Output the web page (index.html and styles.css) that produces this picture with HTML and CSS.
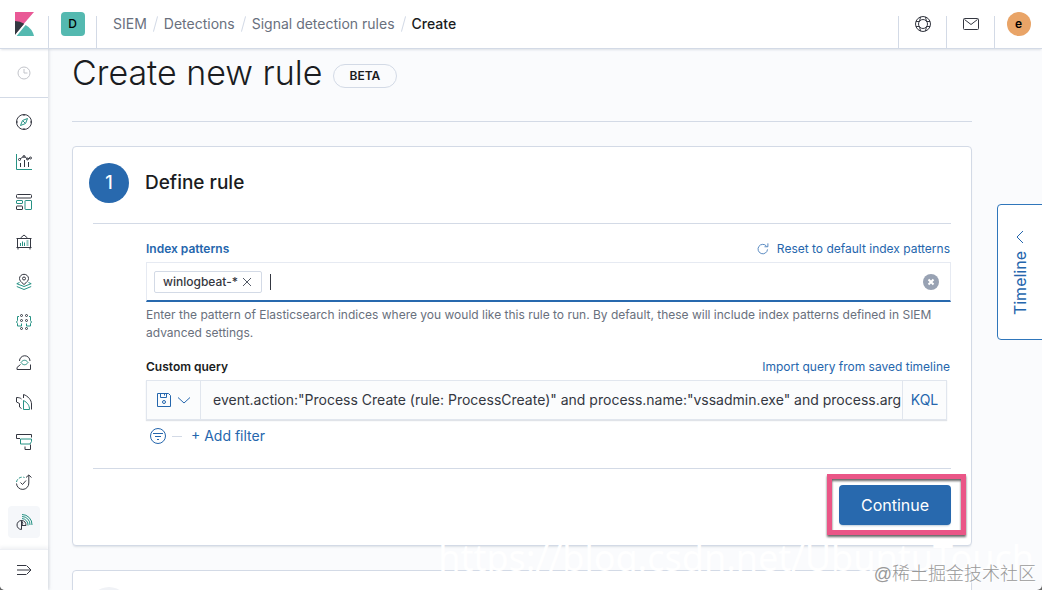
FILE: index.html
```html
<!DOCTYPE html>
<html lang="en">

<head>
    <meta charset="UTF-8">
    <title>Create - Signal detection rules - Kibana</title>
    <link rel="stylesheet" href="styles.css">
</head>

<body>
    <div class="app">
        <header class="header">
            <a class="header-cell logo" href="#" aria-label="Home">
                <svg width="24" height="24" viewBox="0 0 24 24">
                    <path fill="#e7478b" fill-opacity=".9" d="M3 0h19L3 22z"/>
                    <path fill="#343741" d="M3 9v14L12.200 11.700A18 18 0 0 0 3 9z"/>
                    <path fill="#54b9b0" d="M13.600 13 4.600 24H22a17 17 0 0 0-8.400-11z"/>
                    <path stroke="#fff" d="M3.500 23.500 23 0"/>
                </svg>
            </a>
            <button class="header-cell sep" aria-label="Default space"><span class="space">D</span></button>
            <nav class="crumbs sep">
                <a href="#">SIEM</a>
                <i></i>
                <a href="#">Detections</a>
                <i></i>
                <a href="#">Signal detection rules</a>
                <i></i>
                <span class="current">Create</span>
            </nav>
            <button class="header-cell sep" aria-label="Help">
                <svg class="icon" viewBox="0 0 16 16"><circle cx="8" cy="8" r="7.500"/><circle cx="8" cy="8" r="4.500"/><path d="m5.500 1-1 4.500L1 5.500M10.500 1l1 4.500 3.500 0M5.500 15l-1-4.500L1 10.500M10.500 15l1-4.500 3.500 0"/></svg>
            </button>
            <button class="header-cell sep" aria-label="Newsfeed">
                <svg class="icon" viewBox="0 0 16 16"><rect x=".5" y="2.500" width="15" height="11" rx="1"/><path d="m1.500 3.500 6.500 5 6.500-5"/></svg>
            </button>
            <button class="header-cell sep" aria-label="Account"><span class="avatar">e</span></button>
        </header>

        <div class="body">
            <nav class="sidebar">
                <a class="recent" href="#" aria-label="Recently viewed">
                    <svg class="icon muted" viewBox="0 0 16 16"><circle cx="8" cy="8" r="6"/><path d="M8 4v4h3.500"/></svg>
                </a>
                <div class="nav-list">
                    <a href="#" aria-label="Discover">
                        <svg class="icon" viewBox="0 0 16 16"><circle cx="8" cy="8" r="7.500"/><path d="M8 .5V2m0 12v1.500M.5 8H2m12 0h1.500"/><path class="teal" d="M11.500 4.500 9.500 9.500l-5 2 2-5z"/><path class="teal" d="m7 7 2 2"/></svg>
                    </a>
                    <a href="#" aria-label="Visualize">
                        <svg class="icon" viewBox="0 0 16 16"><path class="teal" d="M.5 0v15.500H16"/><path d="M4.500 9v4M8.500 6v7M12.500 8v5"/><path d="m4 5 3.500-2.500M8.500 2.500l3 2.500 2.500-1"/><circle cx="3.500" cy="5.500" r="1"/><circle cx="8" cy="2.500" r="1"/><circle cx="11.500" cy="5" r="1"/><circle cx="14.500" cy="4" r="1"/></svg>
                    </a>
                    <a href="#" aria-label="Dashboard">
                        <svg class="icon" viewBox="0 0 16 16"><rect x=".5" y=".5" width="15" height="3.500" rx="1"/><rect class="teal" x=".5" y="6.500" width="6" height="3" rx=".5"/><rect class="teal" x="9" y="6.500" width="6.500" height="9" rx=".5"/><rect x=".5" y="12" width="6" height="3.500" rx=".5"/></svg>
                    </a>
                    <a href="#" aria-label="Canvas">
                        <svg class="icon" viewBox="0 0 16 16"><path d="M.5 4.500h15M1.500 4.500v9M14.500 4.500v9M.5 13.500h15M4.500 4 8 1l3.500 3M2 15.500v-2m12 2v-2"/><path class="teal" d="M4.500 9v3M6.500 7.500V12M8.500 8.500V12M10.500 7h2m-2 2h2m-2 2h2"/></svg>
                    </a>
                    <a href="#" aria-label="Maps">
                        <svg class="icon" viewBox="0 0 16 16"><path d="M8 10.500C5 8 3.500 6.500 3.500 4.500a4.500 4.200 0 0 1 9 0c0 2-1.500 3.500-4.500 6z"/><circle cx="8" cy="4.500" r="1.500"/><path class="teal" d="M3.500 8.500.8 9.700 8 12.500l7.200-2.800-2.700-1.200M.8 12.500 8 15.500l7.200-3"/></svg>
                    </a>
                    <a href="#" aria-label="Machine learning">
                        <svg class="icon" viewBox="0 0 16 16"><circle cx="5.500" cy="1.500" r="1"/><circle cx="10.500" cy="1.500" r="1"/><circle cx="5.500" cy="6.500" r="1"/><circle cx="10.500" cy="6.500" r="1"/><circle cx="5.500" cy="14.500" r="1"/><circle cx="10.500" cy="14.500" r="1"/><path class="teal" d="M3 2.500H1.500v4L.5 8l1 1.500v2.500H5.500V9.500M13 2.500h1.500v4l1 1.500-1 1.500v2.500H10.500V9.500"/></svg>
                    </a>
                    <a href="#" aria-label="Metrics">
                        <svg class="icon" viewBox="0 0 16 16"><path d="M3.500 7A5 5 0 1 1 14 7M4.500 10.500l-3.500 3v2h13.500v-5"/><path class="teal" d="M5 8.500c2-3 5-3 7 0-2 3-5 3-7 0z"/></svg>
                    </a>
                    <a href="#" aria-label="Logs">
                        <svg class="icon" viewBox="0 0 16 16"><path d="M5.500 14.500 3.500 13V9.500L.5 8V3.500C3 3.500 4.500 4 5.500 5M7.500 4V.5C12 2 15.500 6 15.500 10v5.500"/><path class="teal" d="M7.500 6.500v9h6c0-4-2-7-6-9z"/></svg>
                    </a>
                    <a href="#" aria-label="APM">
                        <svg class="icon" viewBox="0 0 16 16"><path d="M4 4.500H.5v-4h15v3M9 12.500v3h5.500v-5"/><path class="teal" d="M4.500 5h11v2.500l-1.500 2.500h-9.500z"/></svg>
                    </a>
                    <a href="#" aria-label="Uptime">
                        <svg class="icon" viewBox="0 0 16 16"><path d="M.5 9.500A6 6 0 0 0 12.800 9V1M10 3.500 12.800 1l2.700 2.500M4.500 8.500l2 2 3.500-4"/><path class="teal" stroke-dasharray="3 1.500" d="M.5 8a6 6 0 0 1 8-4.500"/></svg>
                    </a>
                    <a class="active" href="#" aria-label="SIEM">
                        <svg class="icon" viewBox="0 0 16 16"><path d="M5.500 6.500a4.500 4.500 0 0 0 0 9zM5.500 6.500a4 4 0 0 1 0 5.500"/><path d="M5.500 6.500c3 0 4.500 2 4.500 5H5.500"/><path class="teal" d="M6 4.500a6.500 6.500 0 0 1 6 7M6 2.500a8 8 0 0 1 8 8.500M6 .5a10 10 0 0 1 10 10.500"/></svg>
                    </a>
                </div>
                <button class="expand" aria-label="Expand navigation">
                    <svg class="icon" viewBox="0 0 16 16"><path d="M1 3.500h9.500M1 8h14M1 12.500h9.500M11 4l4 4-4 4"/></svg>
                </button>
            </nav>

            <main class="main">
                <div class="page-title">
                    <h1>Create new rule</h1>
                    <span class="beta">BETA</span>
                </div>

                <section class="panel">
                    <div class="step-head">
                        <span class="step-num">1</span>
                        <h2>Define rule</h2>
                    </div>
                    <form class="step-form">
                        <div class="fields">
                            <div class="label-row">
                                <label class="focused" for="index">Index patterns</label>
                                <a href="#"><svg class="icon small" viewBox="0 0 16 16"><path d="M14 8.500A6.300 6.300 0 1 1 12.500 4M14.500 .5v4.500H10"/></svg>Reset to default index patterns</a>
                            </div>
                            <div class="combo">
                                <span class="pill">winlogbeat-*<button type="button" aria-label="Remove winlogbeat-*"><svg class="icon" viewBox="0 0 16 16"><path d="m4 4 8 8m0-8-8 8"/></svg></button></span>
                                <span class="caret"></span>
                                <input id="index" type="text">
                                <button class="clear" type="button" aria-label="Clear input"><svg width="16" height="16" viewBox="0 0 16 16"><circle cx="8" cy="8" r="8" fill="#98a2b3"/><path d="m5.500 5.500 5 5m0-5-5 5" stroke="#fff" stroke-width="2"/></svg></button>
                            </div>
                            <p class="help">Enter the pattern of Elasticsearch indices where you would like this rule to run. By default, these will include index patterns defined in SIEM advanced settings.</p>

                            <div class="label-row">
                                <label for="query">Custom query</label>
                                <a href="#">Import query from saved timeline</a>
                            </div>
                            <div class="query-bar">
                                <button class="saved" type="button" aria-label="Saved queries">
                                    <svg class="icon" viewBox="0 0 16 16"><path d="M1.500 1.500h11l2 2v11h-13zM4.500 1.500v4h6v-4M8.500 2v1.500"/><circle cx="8" cy="10" r="1.500"/></svg>
                                    <svg class="icon" viewBox="0 0 16 16"><path d="m2 5.500 6 5.500 6-5.500"/></svg>
                                </button>
                                <input id="query" type="text" value='event.action:"Process Create (rule: ProcessCreate)" and process.name:"vssadmin.exe" and process.arg'>
                                <button class="kql" type="button">KQL</button>
                            </div>
                            <div class="filters">
                                <button type="button" aria-label="Filter options"><svg class="icon" viewBox="0 0 16 16"><circle cx="8" cy="8" r="7.500"/><path d="M3 5.500h10M5 8.500h6M7 11.500h2"/></svg></button>
                                <span class="dash"></span>
                                <button type="button">+ Add filter</button>
                            </div>
                        </div>
                        <div class="actions">
                            <button class="continue" type="submit">Continue</button>
                        </div>
                    </form>
                </section>

                <section class="panel">
                    <div class="step-head">
                        <span class="step-num disabled"></span>
                    </div>
                </section>
            </main>
        </div>

        <button class="timeline">
            <span>Timeline</span>
            <svg class="icon" viewBox="0 0 16 16"><path d="m2 11 6-6 6 6"/></svg>
        </button>
        <div class="watermark">https://blog.csdn.net/UbuntuTouch</div>
        <div class="credit">@稀土掘金技术社区</div>
    </div>
</body>

</html>
```

FILE: styles.css
```css
* {
    box-sizing: border-box;
}

html {
    background: #666;
}

body {
    margin: 0;
    color: #343741;
    font: 14px/20px Inter, "Noto Sans CJK SC", sans-serif;
}

a {
    color: #2566ad;
    text-decoration: none;
}

button,
input {
    padding: 0;
    border: 0;
    background: none;
    color: inherit;
    font: inherit;
    outline: none;
}

h1,
h2,
p {
    margin: 0;
}

.icon {
    width: 16px;
    height: 16px;
    fill: none;
    stroke: currentColor;
    flex: none;
    overflow: visible;
}

.icon.small {
    width: 12px;
    height: 12px;
}

.icon.muted {
    color: #c2c4ca;
}

.teal {
    stroke: #269284;
}

.app {
    position: relative;
    display: flex;
    flex-direction: column;
    height: 100vh;
    overflow: hidden;
    background: #fafbfd;
    border-radius: 0 0 5px 5px;
}

/* header */
.header {
    display: flex;
    flex: none;
    height: 49px;
    background: #fff;
    border-bottom: 1px solid #d3dae6;
    box-shadow: 0 2px 2px -1px rgba(152, 162, 179, 0.3);
    z-index: 1;
}

.header-cell {
    display: flex;
    align-items: center;
    justify-content: center;
    width: 48px;
    flex: none;
}

.sep {
    padding-left: 1px;
    background: linear-gradient(#d3dae6, #d3dae6) left bottom / 1px 32px no-repeat;
}

.space,
.avatar {
    width: 24px;
    height: 24px;
    border-radius: 4px;
    background: #54b9b0;
    color: #000;
    font-size: 12px;
    font-weight: 500;
    line-height: 24px;
    text-align: center;
}

.avatar {
    border-radius: 50%;
    background: #e9a467;
    font-weight: 600;
}

.crumbs {
    display: flex;
    flex: 1;
    align-items: center;
    padding-left: 17px;
}

.crumbs a {
    color: #69707d;
}

.crumbs i {
    width: 1px;
    height: 16px;
    margin: 0 8px;
    background: #d3dae6;
    transform: rotate(15deg);
}

.crumbs .current {
    color: #1a1c21;
    font-weight: 500;
}

/* left navigation */
.body {
    display: flex;
    flex: 1;
    min-height: 0;
}

.sidebar {
    display: flex;
    flex-direction: column;
    flex: none;
    width: 48px;
    background: #fff;
    box-shadow: 1px 0 3px rgba(152, 162, 179, 0.35);
}

.sidebar a {
    display: flex;
    align-items: center;
    justify-content: center;
}

.recent {
    height: 49px;
    border-bottom: 1px solid #d3dae6;
}

.nav-list {
    display: grid;
    flex: 1;
    align-content: start;
    justify-content: center;
    gap: 8px;
    padding-top: 8px;
}

.nav-list a {
    width: 32px;
    height: 32px;
    border-radius: 4px;
    color: #343741;
}

.nav-list .active {
    background: #f5f7fa;
}

.expand {
    display: flex;
    align-items: center;
    justify-content: center;
    height: 41px;
    border-top: 1px solid #eef0f4;
    box-shadow: 0 -2px 3px rgba(152, 162, 179, 0.15);
}

/* page */
.main {
    flex: 1;
    min-width: 0;
    padding: 0 70px 0 24px;
}

.page-title {
    display: flex;
    align-items: center;
    gap: 10px;
    height: 73px;
    padding-bottom: 24px;
    margin-bottom: 24px;
    border-bottom: 1px solid #d3dae6;
}

h1 {
    color: #1a1c21;
    font-size: 34px;
    font-weight: 300;
    line-height: 48px;
}

.beta {
    height: 24px;
    padding: 0 16px;
    margin-top: 6px;
    border: 1px solid #d3dae6;
    border-radius: 12px;
    color: #1a1c21;
    font-size: 12px;
    font-weight: 600;
    line-height: 22px;
}

.panel {
    padding: 16px 20px 20px 16px;
    margin-bottom: 24px;
    background: #fff;
    border: 1px solid #d3dae6;
    border-radius: 4px;
    box-shadow: 0 2px 2px -1px rgba(152, 162, 179, 0.3);
}

.step-head {
    display: flex;
    align-items: center;
    gap: 16px;
}

.step-num {
    width: 40px;
    height: 40px;
    border-radius: 50%;
    background: #2869ae;
    color: #fff;
    font-size: 18px;
    font-weight: 500;
    line-height: 40px;
    text-align: center;
}

.step-num.disabled {
    background: #f0f2f6;
}

h2 {
    color: #1a1c21;
    font-size: 19px;
    font-weight: 500;
    line-height: 24px;
}

.step-form {
    margin: 20px 0 0 4px;
    border-top: 1px solid #d3dae6;
}

.fields {
    padding: 16px 0 16px 53px;
}

.label-row {
    display: flex;
    justify-content: space-between;
    margin-bottom: 4px;
    font-size: 12px;
    line-height: 18px;
}

.label-row label {
    color: #1a1c21;
    font-weight: 600;
}

.label-row .focused {
    color: #2566ad;
}

.label-row a {
    display: flex;
    align-items: center;
    gap: 8px;
    padding-right: 1px;
}

.combo {
    display: flex;
    align-items: center;
    gap: 8px;
    height: 40px;
    padding: 0 11px 0 7px;
    border: 1px solid #e6eaf2;
    border-bottom: 2px solid #2869ae;
}

.pill {
    display: flex;
    align-items: center;
    gap: 1px;
    height: 22px;
    padding: 0 6px 0 8px;
    border: 1px solid #d3dae6;
    border-radius: 2px;
    font-size: 12px;
    font-weight: 500;
}

.pill button,
.clear {
    display: flex;
}

.pill .icon {
    color: #535966;
}

.caret {
    width: 1px;
    height: 16px;
    background: #343741;
}

.combo input {
    flex: 1;
    min-width: 0;
}

.help {
    padding: 4px 0 16px;
    color: #69707d;
    font-size: 12px;
    line-height: 18px;
}

.query-bar {
    display: flex;
    height: 40px;
    margin-right: 4px;
    border: 1px solid #e1e6ee;
    background: #fbfcfd;
    box-shadow: 0 1px 1px rgba(152, 162, 179, 0.3);
}

.saved {
    display: flex;
    align-items: center;
    justify-content: center;
    gap: 4px;
    width: 54px;
    border-right: 1px solid #e1e6ee;
    color: #2566ad;
}

.query-bar input {
    flex: 1;
    min-width: 0;
    padding-left: 12px;
}

.kql {
    width: 44px;
    border-left: 1px solid #e1e6ee;
    color: #2566ad;
}

.filters {
    display: flex;
    align-items: center;
    gap: 6px;
    height: 32px;
    padding-left: 4px;
    color: #2566ad;
}

.filters button {
    display: flex;
}

.dash {
    width: 10px;
    height: 1px;
    margin-right: 3px;
    background: #d3dae6;
}

.actions {
    display: flex;
    justify-content: flex-end;
    padding-top: 16px;
    border-top: 1px solid #d3dae6;
}

.continue {
    position: relative;
    width: 112px;
    height: 40px;
    border-radius: 4px;
    background: #2869ae;
    color: #fff;
    font-size: 16px;
    box-shadow: 0 2px 2px -1px rgba(39, 87, 130, 0.3);
}

/* highlight frame around the button */
.continue::after {
    content: "";
    position: absolute;
    inset: -11px -15px -10px -12px;
    border: 5px solid #ea5687;
    filter: drop-shadow(0 2px 1px rgba(0, 0, 0, 0.6));
}

/* flyout tab on the right edge */
.timeline {
    position: absolute;
    top: 204px;
    right: -1px;
    display: flex;
    align-items: center;
    gap: 6px;
    width: 46px;
    height: 136px;
    padding: 24px 14px;
    border: 1px solid #2f76bb;
    border-radius: 4px 0 0 4px;
    background: #fff;
    color: #2566ad;
    font-size: 16px;
    writing-mode: sideways-lr;
}

.timeline .icon {
    transform: rotate(-90deg);
}

.watermark,
.credit {
    position: absolute;
    right: 8px;
    white-space: nowrap;
    pointer-events: none;
    z-index: 2;
}

.watermark {
    bottom: 8px;
    color: #fff;
    font: 36px/48px "Noto Sans", sans-serif;
}

.credit {
    right: 6px;
    bottom: 4px;
    color: #999;
    font: 300 18px/24px "Liberation Sans", "Noto Sans CJK SC", sans-serif;
    text-shadow: 1px 1px 1px #fff;
}
```
